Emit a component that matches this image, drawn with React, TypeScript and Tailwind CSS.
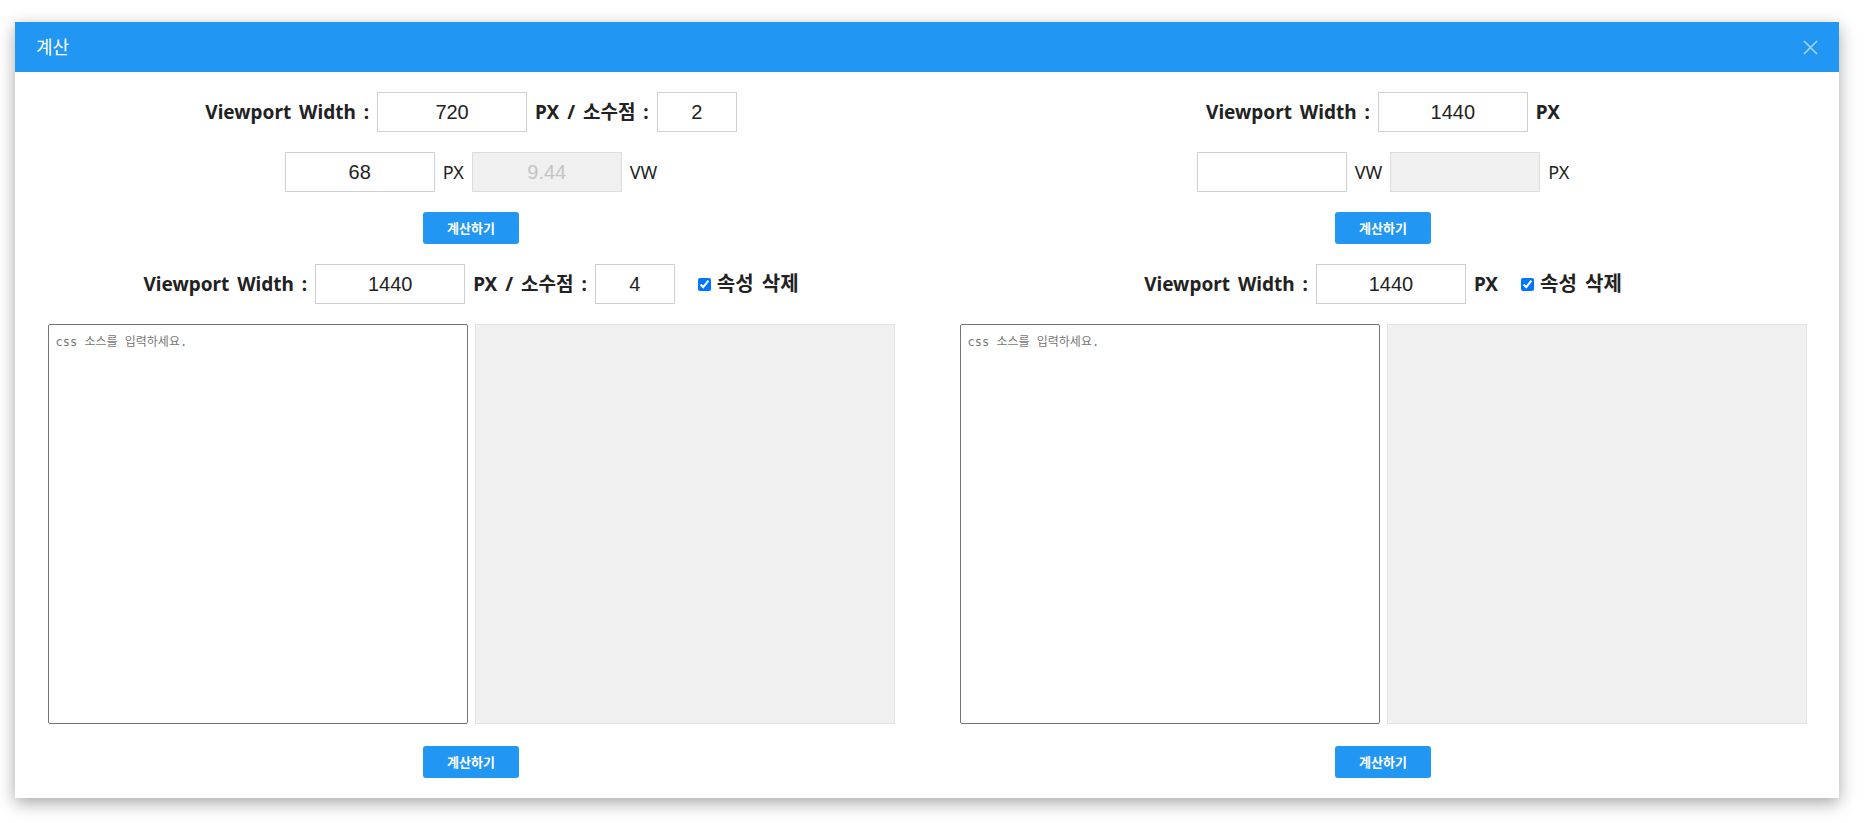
const font = "font-['Noto_Sans','Noto_Sans_CJK_KR',sans-serif]";

function NumberInput({ value, width = 'w-[150px]' }: { value: string; width?: string }) {
  return (
    <input
      defaultValue={value}
      className={`${width} h-[40px] border border-[#cfcfcf] bg-white text-center text-[20px] text-[#222] font-['Liberation_Sans',Arial,sans-serif] outline-none`}
    />
  );
}

function ResultInput({ value }: { value: string }) {
  return (
    <input
      disabled
      defaultValue={value}
      className="w-[150px] h-[40px] border border-[#dcdcdc] bg-[#f0f0f0] text-center text-[20px] text-[#c4c4c4] font-['Liberation_Sans',Arial,sans-serif]"
    />
  );
}

function CalcButton() {
  return (
    <button className="w-[96px] h-[32px] rounded-[3px] bg-[#2196f3] text-white text-[13px] font-bold font-['Noto_Sans_CJK_KR',sans-serif]">
      계산하기
    </button>
  );
}

function Label({ children, bold = true }: { children: React.ReactNode; bold?: boolean }) {
  return (
    <span
      className={`text-[#222] whitespace-nowrap [word-spacing:3px] ${bold ? 'text-[19px] font-bold' : 'font-normal text-[18px]'}`}
    >
      {children}
    </span>
  );
}

function Removal() {
  return (
    <label className="flex items-center gap-[6px]">
      <input type="checkbox" defaultChecked className="w-[13px] h-[13px] accent-[#0075ff]" />
      <span className="text-[20px] font-bold text-[#222] [word-spacing:3px]">속성 삭제</span>
    </label>
  );
}

function CssBoxes() {
  return (
    <div className="mt-[20px] flex gap-[7px]">
      <textarea
        placeholder="css 소스를 입력하세요."
        className="w-[420px] h-[400px] resize-none border border-[#767676] rounded-[2px] px-[7px] py-[9px] text-[12px] leading-[16px] text-[#333] placeholder:text-[#777] font-['DejaVu_Sans_Mono','Noto_Sans_CJK_KR',monospace] outline-none"
      />
      <textarea
        readOnly
        className="w-[420px] h-[400px] resize-none border border-[#e2e2e2] bg-[#f0f0f0] outline-none"
      />
    </div>
  );
}

export default function App() {
  return (
    <div className={`min-h-screen bg-white pt-[22px] pl-[15px] ${font}`}>
      <div className="w-[1824px] bg-white shadow-[0_5px_16px_rgba(0,0,0,0.35)]">
        {/* header */}
        <div className="h-[50px] bg-[#2196f3] flex items-center justify-between px-[21px]">
          <span className="text-white text-[18px]">계산</span>
          <svg width="15" height="15" viewBox="0 0 15 15" className="opacity-60">
            <path d="M1 1 L14 14 M14 1 L1 14" stroke="#fff" strokeWidth="1.6" />
          </svg>
        </div>

        <div className="grid grid-cols-2 pt-[20px] pb-[20px]">
          {/* px -> vw */}
          <div className="flex flex-col items-center">
            <div className="flex items-center h-[40px] gap-[8px]">
              <Label>Viewport Width :</Label>
              <NumberInput value="720" />
              <Label>PX / 소수점 :</Label>
              <NumberInput value="2" width="w-[80px]" />
            </div>
            <div className="mt-[20px] flex items-center h-[40px] gap-[8px]">
              <NumberInput value="68" />
              <Label bold={false}>PX</Label>
              <ResultInput value="9.44" />
              <Label bold={false}>VW</Label>
            </div>
            <div className="mt-[20px]">
              <CalcButton />
            </div>
            <div className="mt-[20px] flex items-center h-[40px] gap-[8px]">
              <Label>Viewport Width :</Label>
              <NumberInput value="1440" />
              <Label>PX / 소수점 :</Label>
              <NumberInput value="4" width="w-[80px]" />
              <div className="ml-[15px]">
                <Removal />
              </div>
            </div>
            <CssBoxes />
            <div className="mt-[22px]">
              <CalcButton />
            </div>
          </div>

          {/* vw -> px */}
          <div className="flex flex-col items-center">
            <div className="flex items-center h-[40px] gap-[8px]">
              <Label>Viewport Width :</Label>
              <NumberInput value="1440" />
              <Label>PX</Label>
            </div>
            <div className="mt-[20px] flex items-center h-[40px] gap-[8px]">
              <NumberInput value="" />
              <Label bold={false}>VW</Label>
              <ResultInput value="" />
              <Label bold={false}>PX</Label>
            </div>
            <div className="mt-[20px]">
              <CalcButton />
            </div>
            <div className="mt-[20px] flex items-center h-[40px] gap-[8px]">
              <Label>Viewport Width :</Label>
              <NumberInput value="1440" />
              <Label>PX</Label>
              <div className="ml-[15px]">
                <Removal />
              </div>
            </div>
            <CssBoxes />
            <div className="mt-[22px]">
              <CalcButton />
            </div>
          </div>
        </div>
      </div>
    </div>
  );
}
